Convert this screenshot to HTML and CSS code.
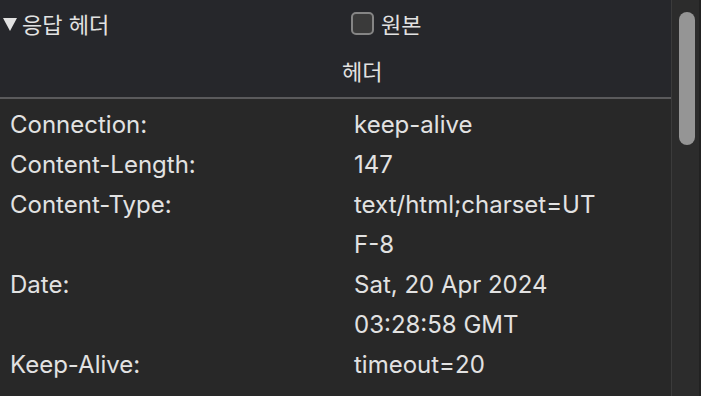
FILE: index.html
```html
<!DOCTYPE html>
<html lang="ko">

<head>
    <meta charset="UTF-8">
    <title>응답 헤더</title>
    <link rel="stylesheet" href="styles.css">
</head>

<body>
    <div class="panel">
        <div class="main">
            <div class="head">
                <div class="head-top">
                    <div class="title"><span class="arrow"></span>응답 헤더</div>
                    <label class="raw">
                        <span class="checkbox"></span>
                        <span>원본</span>
                    </label>
                </div>
                <div class="head-col">헤더</div>
            </div>
            <div class="rows">
                <div class="name">Connection:</div>
                <div class="value">keep-alive</div>
                <div class="name">Content-Length:</div>
                <div class="value">147</div>
                <div class="name">Content-Type:</div>
                <div class="value">text/html;charset=UT<br>F-8</div>
                <div class="name">Date:</div>
                <div class="value">Sat, 20 Apr 2024<br>03:28:58 GMT</div>
                <div class="name">Keep-Alive:</div>
                <div class="value">timeout=20</div>
            </div>
        </div>
        <div class="scrollbar">
            <div class="thumb"></div>
        </div>
    </div>
</body>

</html>
```

FILE: styles.css
```css
* {
    box-sizing: border-box;
    margin: 0;
    padding: 0;
}

body {
    width: 701px;
    height: 396px;
    overflow: hidden;
    background-color: #282828;
    color: #e2e2e2;
    font-family: "Inter", "Noto Sans CJK KR", sans-serif;
    font-size: 24px;
}

.panel {
    display: flex;
    height: 396px;
}

.main {
    flex: 1;
    border-right: 1px solid #3b3b3b;
}

.head {
    background-color: #26272b;
    border-bottom: 2px solid #5a5a5c;
    height: 99px;
    font-family: "Noto Sans CJK KR", sans-serif;
    font-size: 22px;
}

.head-top {
    display: flex;
    align-items: center;
    height: 46px;
}

.title {
    display: flex;
    align-items: center;
    width: 351px;
    padding-left: 3px;
}

/* disclosure triangle */
.arrow {
    width: 0;
    height: 0;
    border-left: 7px solid transparent;
    border-right: 7px solid transparent;
    border-top: 13px solid #e2e2e2;
    margin: 2px 5px 0 0;
}

.raw {
    display: flex;
    align-items: center;
    gap: 7px;
}

.checkbox {
    width: 23px;
    height: 23px;
    border: 2px solid #858585;
    border-radius: 5px;
    background-color: #3a3a3a;
}

.head-col {
    height: 51px;
    line-height: 49px;
    padding-left: 342px;
}

.rows {
    display: grid;
    grid-template-columns: 344px 1fr;
    padding: 6px 0 0 10px;
    line-height: 40px;
}

.scrollbar {
    width: 29px;
    background-color: #2c2c2c;
    border-right: 2px solid #222;
    padding: 12px 0 0 7px;
}

.thumb {
    width: 16px;
    height: 133px;
    border-radius: 8px;
    background-color: #959595;
}
```
